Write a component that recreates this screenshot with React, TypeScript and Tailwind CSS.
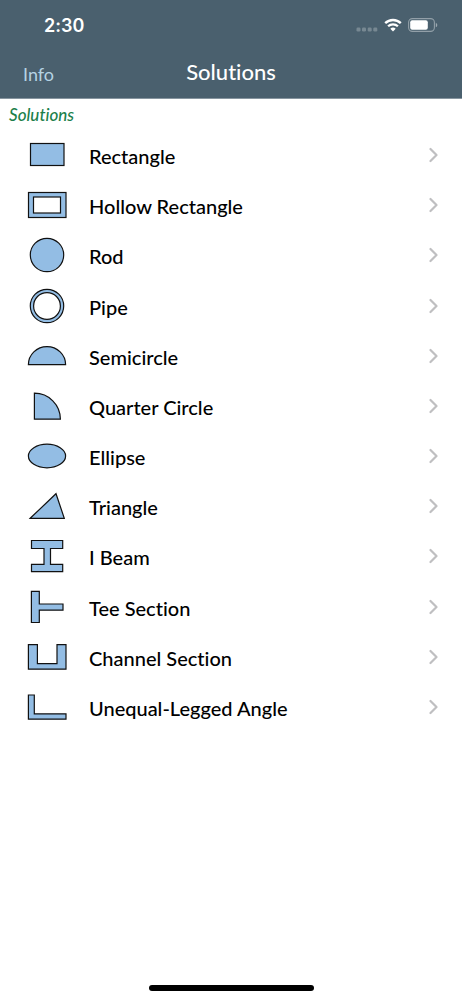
import type { ReactNode } from 'react';

type Solution = {
  href: string;
  label: string;
  shape: ReactNode;
};

const SOLUTIONS: Solution[] = [
  {
    href: '#rectangle',
    label: 'Rectangle',
    shape: <rect x="3.5" y="8.5" width="33.5" height="22" />,
  },
  {
    href: '#hollow-rectangle',
    label: 'Hollow Rectangle',
    shape: (
      <>
        <rect x="1.5" y="7.5" width="37.5" height="25" />
        <rect x="6.5" y="12" width="27" height="16" fill="#fff" />
      </>
    ),
  },
  { href: '#rod', label: 'Rod', shape: <circle cx="20" cy="20" r="16.7" /> },
  {
    href: '#pipe',
    label: 'Pipe',
    shape: (
      <>
        <circle cx="20" cy="20" r="16.7" />
        <circle cx="20" cy="20" r="13.4" fill="#fff" />
      </>
    ),
  },
  {
    href: '#semicircle',
    label: 'Semicircle',
    shape: <path d="M1.4 28.7a18.6 18.1 0 0 1 37.2 0Z" />,
  },
  {
    href: '#quarter-circle',
    label: 'Quarter Circle',
    shape: <path d="M7.4 7.2a26 26 0 0 1 26 26h-26Z" />,
  },
  {
    href: '#ellipse',
    label: 'Ellipse',
    shape: <ellipse cx="20" cy="20" rx="18.6" ry="11.8" />,
  },
  {
    href: '#triangle',
    label: 'Triangle',
    shape: <path d="M3.2 32.3 29 7.7l8.3 24.6Z" />,
  },
  {
    href: '#i-beam',
    label: 'I Beam',
    shape: (
      <path d="M4.5 4.5h31.2v8H23.5v15.9h12.2v7.2H4.5v-7.2H17V12.5H4.5Z" />
    ),
  },
  {
    href: '#tee-section',
    label: 'Tee Section',
    shape: <path d="M4.4 4.4h7.9V17H36v6.2H12.3v12.3H4.4Z" />,
  },
  {
    href: '#channel-section',
    label: 'Channel Section',
    shape: <path d="M1.4 7.6h9v19H30v-19h9v24.6H1.4Z" />,
  },
  {
    href: '#unequal-legged-angle',
    label: 'Unequal-Legged Angle',
    shape: <path d="M1.4 8h5.9v18.8H39v5.4H1.4Z" />,
  },
];

function StatusBar() {
  return (
    <div className="flex h-[50px] items-center justify-between pr-6 pl-11">
      <span className="pt-0.5 font-['Inter',sans-serif] text-[18px] leading-6 font-semibold">2:30</span>
      <div className="flex items-center">
        <svg width="22" height="16" viewBox="0 0 22 16" className="mr-1.5 fill-white/25" aria-hidden="true">
          <rect x="0.5" y="10.5" width="4" height="4" rx="1.3" />
          <rect x="6" y="10.5" width="4" height="4" rx="1.3" />
          <rect x="11.7" y="10.5" width="4" height="4" rx="1.3" />
          <rect x="17.3" y="10.5" width="4" height="4" rx="1.3" />
        </svg>
        <svg width="18" height="14" viewBox="0 0 18 14" fill="none" className="mr-1.5" aria-hidden="true">
          <path d="M1.2 5.2a11.2 11.2 0 0 1 15.6 0" stroke="#fff" strokeWidth="2.4" />
          <path d="M4.1 8.3a7 7 0 0 1 9.8 0" stroke="#fff" strokeWidth="2.3" />
          <path d="M9 13.6 6.3 10.8a3.9 3.9 0 0 1 5.4 0Z" fill="#fff" />
        </svg>
        <svg width="30" height="14" viewBox="0 0 30 14" fill="none" aria-hidden="true">
          <rect x="0.6" y="0.6" width="25.8" height="12.8" rx="3.8" stroke="#fff" strokeOpacity="0.4" strokeWidth="1.1" />
          <rect x="2.2" y="2.2" width="17.6" height="9.6" rx="2" fill="#fff" />
          <path d="M27.8 4.7a2.5 2.5 0 0 1 0 4.6Z" fill="#fff" fillOpacity="0.45" />
        </svg>
      </div>
    </div>
  );
}

function NavBar() {
  return (
    <nav className="grid grid-cols-[1fr_auto_1fr] items-center px-[23px] pt-2 pb-3">
      <button type="button" className="justify-self-start pt-1 text-[18px] leading-6 text-[#b5d3e3]">
        Info
      </button>
      <h1 className="text-[22px] leading-7 font-medium">Solutions</h1>
    </nav>
  );
}

function SolutionRow({ href, label, shape }: Solution) {
  return (
    <li>
      <a href={href} className="flex h-full items-center pr-[23px] pl-[27px]">
        <svg
          width="40"
          height="40"
          viewBox="0 0 40 40"
          fill="#93bde4"
          stroke="#111"
          strokeWidth="1.2"
          className="shrink-0"
          aria-hidden="true"
        >
          {shape}
        </svg>
        <span className="flex-1 pt-0.5 pl-[22px] text-[20px] leading-6 font-medium">{label}</span>
        <svg width="10" height="16" viewBox="0 0 10 16" fill="none" className="shrink-0" aria-hidden="true">
          <path d="m1.5 2 6 6-6 6" stroke="#bfbfc1" strokeWidth="2.2" strokeLinecap="round" strokeLinejoin="round" />
        </svg>
      </a>
    </li>
  );
}

export default function App() {
  return (
    <div className="flex min-h-screen flex-col bg-white font-['Lato',sans-serif] text-black [font-variant-ligatures:none]">
      <header className="border-b border-[#87959f] bg-[#4a606e] text-white">
        <StatusBar />
        <NavBar />
      </header>

      <main className="flex-1">
        <h2 className="px-[9px] pt-1 pb-[3px] text-[17px] leading-6 font-medium text-[#1c7f4b] italic">Solutions</h2>
        <ul className="grid min-h-[602px] auto-rows-fr">
          {SOLUTIONS.map((item) => (
            <SolutionRow key={item.href} {...item} />
          ))}
        </ul>
      </main>

      <div className="mx-auto mb-[9px] h-1.5 w-[165px] rounded-full bg-black" />
    </div>
  );
}
